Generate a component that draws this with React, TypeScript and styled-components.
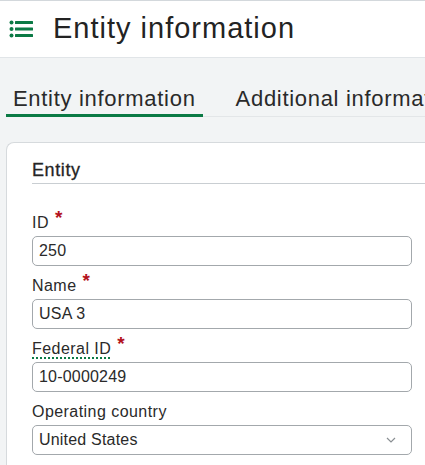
import React from "react";
import styled, { createGlobalStyle } from "styled-components";

const Global = createGlobalStyle`
  html, body { margin: 0; padding: 0; }
  body {
    background: #f2f4f5;
    font-family: "Liberation Sans", Arial, sans-serif;
    color: #252525;
    overflow: hidden;
  }
`;

const Page = styled.div`
  width: 425px;
  height: 465px;
  overflow: hidden;
  border-top: 1px solid #d3d8dc;
  box-sizing: border-box;
`;

const TopBar = styled.header`
  height: 56px;
  background: #ffffff;
  border-bottom: 1px solid #e1e5e8;
  display: flex;
  align-items: center;
  padding-left: 9px;
  gap: 20px;
`;

const Title = styled.h1`
  margin: 0;
  font-size: 29px;
  font-weight: 400;
  letter-spacing: 1px;
  color: #232323;
  line-height: 1;
  padding-bottom: 2px;
`;

const Tabs = styled.nav`
  margin: 28px 0 0 6px;
  display: flex;
  gap: 26px;
  border-bottom: 1px solid #e3e6e8;
`;

const Tab = styled.div<{ $active?: boolean }>`
  font-size: 22px;
  line-height: 26px;
  letter-spacing: 0.7px;
  padding: 0 7px 2px;
  white-space: nowrap;
  color: #2a2a2a;
  border-bottom: 3px solid ${(p) => (p.$active ? "#0b7a45" : "transparent")};
  margin-bottom: -1px;
`;

const Card = styled.section`
  margin: 25px 0 0 6px;
  width: 470px;
  background: #ffffff;
  border: 1px solid #d6dadd;
  border-right: none;
  border-radius: 8px 0 0 0;
  padding: 16px 0 40px 25px;
  box-sizing: border-box;
`;

const SectionTitle = styled.h2`
  margin: 0;
  font-size: 18px;
  line-height: 22px;
  font-weight: 400;
  letter-spacing: 0.6px;
  -webkit-text-stroke: 0.3px #252525;
  padding-bottom: 2px;
  border-bottom: 1px solid #c9ced2;
`;

const Fields = styled.div`
  margin-top: 29px;
  width: 380px;
  display: flex;
  flex-direction: column;
  gap: 10px;
`;

const Field = styled.div`
  display: flex;
  flex-direction: column;
  gap: 3px;
`;

const Label = styled.label`
  font-size: 16px;
  line-height: 20px;
  letter-spacing: 0.45px;
  color: #2a2a2a;
  white-space: nowrap;
`;

const Hint = styled.span`
  text-decoration: underline dotted #0b7a45;
  text-decoration-thickness: 2px;
  text-underline-offset: 3px;
`;

const Required = styled.span`
  color: #b3121c;
  font-size: 19px;
  font-weight: 700;
  margin-left: 6px;
  vertical-align: 4px;
  line-height: 0;
`;

const Input = styled.div`
  height: 30px;
  box-sizing: border-box;
  border: 1px solid #a3a8ac;
  border-radius: 5px;
  background: #ffffff;
  padding: 0 6px;
  display: flex;
  align-items: center;
  justify-content: space-between;
  font-size: 16px;
  letter-spacing: 0.2px;
  color: #2a2a2a;
`;

const Chevron = styled.svg`
  width: 10px;
  height: 6px;
  margin-right: 9px;
`;

function ListIcon() {
  return (
    <svg width="24" height="20" viewBox="0 0 24 20" aria-hidden>
      <g fill="#0b7a45">
        <circle cx="2.5" cy="3.5" r="2" />
        <circle cx="2.5" cy="10" r="2" />
        <circle cx="2.5" cy="16.5" r="2" />
        <rect x="6" y="2" width="18" height="3" rx="0.5" />
        <rect x="6" y="8.5" width="18" height="3" rx="0.5" />
        <rect x="6" y="15" width="18" height="3" rx="0.5" />
      </g>
    </svg>
  );
}

export default function App() {
  return (
    <>
      <Global />
      <Page>
        <TopBar>
          <ListIcon />
          <Title>Entity information</Title>
        </TopBar>
        <Tabs>
          <Tab $active>Entity information</Tab>
          <Tab>Additional information</Tab>
        </Tabs>
        <Card>
          <SectionTitle>Entity</SectionTitle>
          <Fields>
            <Field>
              <Label>
                ID<Required>*</Required>
              </Label>
              <Input>250</Input>
            </Field>
            <Field>
              <Label>
                Name<Required>*</Required>
              </Label>
              <Input>USA 3</Input>
            </Field>
            <Field>
              <Label>
                <Hint>Federal ID</Hint>
                <Required>*</Required>
              </Label>
              <Input>10-0000249</Input>
            </Field>
            <Field>
              <Label>Operating country</Label>
              <Input>
                United States
                <Chevron viewBox="0 0 10 6">
                  <path d="M1 1 L5 5 L9 1" fill="none" stroke="#8a8f93" strokeWidth="1.2" />
                </Chevron>
              </Input>
            </Field>
          </Fields>
        </Card>
      </Page>
    </>
  );
}
